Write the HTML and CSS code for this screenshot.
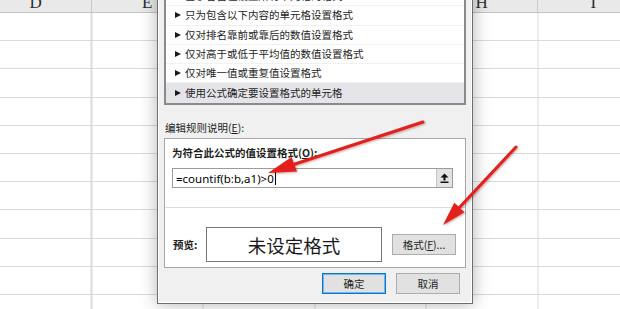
FILE: index.html
```html
<!DOCTYPE html>
<html lang="zh-CN">
<head>
  <meta charset="UTF-8" />
  <meta name="viewport" content="width=device-width, initial-scale=1.0"/>
  <title>新建格式规则</title>
  <link rel="stylesheet" href="styles.css">
</head>
<body>
  <div class="sheet">
    <div class="col-heads">
      <div class="col-head">D</div>
      <div class="col-head">E</div>
      <div class="col-head">F</div>
      <div class="col-head">G</div>
      <div class="col-head">H</div>
      <div class="col-head">I</div>
    </div>
    <div class="cells"></div>

    <div class="dialog">
      <ul class="rule-list">
        <li>基于各自值设置所有单元格的格式</li>
        <li>只为包含以下内容的单元格设置格式</li>
        <li>仅对排名靠前或靠后的数值设置格式</li>
        <li>仅对高于或低于平均值的数值设置格式</li>
        <li>仅对唯一值或重复值设置格式</li>
        <li class="selected">使用公式确定要设置格式的单元格</li>
      </ul>

      <div class="caption">编辑规则说明(<u>E</u>):</div>

      <div class="group">
        <div class="formula-part">
          <div class="label">为符合此公式的值设置格式(<u>O</u>):</div>
          <div class="formula">
            <span class="formula-text">=countif(b:b,a1)&gt;0</span><i class="caret"></i>
            <span class="collapse">
              <svg width="9" height="11" viewBox="0 0 9 11">
                <polygon points="4.5,0.5 0.5,4.5 8.5,4.5" fill="#111"/>
                <rect x="3.5" y="4" width="2" height="3.5" fill="#111"/>
                <rect x="0.5" y="8.5" width="8" height="1.5" fill="#111"/>
              </svg>
            </span>
          </div>
        </div>
        <div class="preview-part">
          <span class="label">预览:</span>
          <div class="preview">未设定格式</div>
          <button class="btn">格式(<u>F</u>)...</button>
        </div>
      </div>

      <div class="actions">
        <button class="btn default">确定</button>
        <button class="btn">取消</button>
      </div>
    </div>

    <!-- red annotation arrows -->
    <svg class="arrows" width="620" height="309" viewBox="0 0 620 309">
      <line x1="423" y1="122" x2="292" y2="165" stroke="#e3201b" stroke-width="3" stroke-linecap="round"/>
      <polygon points="268,173 297,171.5 291.5,157" fill="#e3201b"/>
      <line x1="516" y1="147" x2="458" y2="209" stroke="#e3201b" stroke-width="3" stroke-linecap="round"/>
      <polygon points="443,225 464.5,212.3 454.3,202.7" fill="#e3201b"/>
    </svg>
  </div>
</body>
</html>
```

FILE: styles.css
```css
body {
  margin: 0;
  background: #fff;
  font-family: "Noto Sans CJK SC", "Noto Sans", sans-serif;
  color: #1e1e1e;
}
.sheet {
  position: relative;
  width: 620px;
  height: 309px;
  overflow: hidden;
  background: #fff;
}

/* spreadsheet behind the dialog */
.col-heads {
  display: flex;
  margin-top: -6px;
  margin-left: -19.5px;
  height: 18px;
  border-bottom: 1px solid #c4c4c4;
  background: #e9e9e9;
}
.col-head {
  flex: 0 0 111.5px;
  box-sizing: border-box;
  border-right: 1px solid #c8c8c8;
  text-align: center;
  font-family: "Liberation Serif", serif;
  font-size: 17px;
  line-height: 18px;
  color: #2b2b2b;
}
.cells {
  height: 296px;
  background-image:
    repeating-linear-gradient(to bottom, transparent 0 27.2px, #dadada 27.2px 28.2px),
    repeating-linear-gradient(to right, transparent 0 110.5px, #dadada 110.5px 111.5px);
  background-position: 0 0, -19.5px 0;
}

/* dialog window */
.dialog {
  position: absolute;
  left: 157px;
  top: -22px;
  width: 316px;
  height: 326px;
  box-sizing: border-box;
  padding: 6px;
  background: #f0f0f0;
  border: 1px solid #6e6e6e;
  box-shadow: inset 0 0 0 1px #fff, 0 0 16px rgba(0, 0, 0, 0.3);
  font-size: 10.5px;
}
.rule-list {
  list-style: none;
  margin: 0;
  padding: 0;
  background: #fff;
  border: 2px solid #8a8a8a;
}
.rule-list li {
  height: 19.25px;
  box-sizing: border-box;
  border-bottom: 1px solid #f1f1f1;
  display: flex;
  align-items: center;
  padding-left: 9px;
  line-height: 14px;
}
.rule-list li::before {
  content: "";
  border-left: 6px solid #1a1a1a;
  border-top: 3.5px solid transparent;
  border-bottom: 3.5px solid transparent;
  margin-right: 4px;
}
.rule-list li.selected {
  background: #e4e4e9;
  border-bottom: 0;
}
.caption {
  margin-top: 16.5px;
  padding-left: 1px;
  line-height: 14px;
}
.group {
  margin-top: 3px;
  height: 130px;
  box-sizing: border-box;
  border: 1px solid #a8a8a8;
  background: #fff;
}
.label {
  font-weight: bold;
  line-height: 14px;
}
.formula-part {
  height: 69px;
  box-sizing: border-box;
  padding: 7px 0 0 7px;
  border-bottom: 1px solid #dcdcdc;
}
.formula {
  display: flex;
  align-items: center;
  margin-top: 8px;
  width: 281px;
  height: 20px;
  box-sizing: border-box;
  border: 1px solid #9c9c9c;
  padding-left: 3px;
}
.formula-text {
  font-family: "Noto Sans", sans-serif;
  font-size: 11.5px;
  color: #000;
}
.caret {
  width: 1px;
  height: 14px;
  background: #000;
  margin-left: 1px;
}
.collapse {
  margin-left: auto;
  width: 15px;
  height: 18px;
  display: flex;
  align-items: center;
  justify-content: center;
  background: #e3e3e3;
  border-left: 1px solid #c6c6c6;
}
.preview-part {
  display: flex;
  align-items: center;
  padding: 19px 0 0 8px;
}
.preview-part .label {
  width: 33px;
}
.preview {
  width: 176px;
  height: 35px;
  box-sizing: border-box;
  border: 1px solid #767676;
  display: flex;
  align-items: center;
  justify-content: center;
  font-size: 18.5px;
  color: #1a1a1a;
}
.btn {
  width: 64px;
  height: 21px;
  box-sizing: border-box;
  padding: 0;
  border: 1px solid #adadad;
  background: #e1e1e1;
  font-family: inherit;
  font-size: 10.5px;
  color: #1e1e1e;
}
.preview-part .btn {
  margin-left: 10px;
}
.btn.default {
  border-color: #0078d7;
  box-shadow: inset 0 0 0 1px rgba(0, 120, 215, 0.45);
}
.actions {
  display: flex;
  justify-content: flex-end;
  gap: 10px;
  margin-top: 5px;
  padding-right: 6px;
}

/* annotation overlay */
.arrows {
  position: absolute;
  left: 0;
  top: 0;
  pointer-events: none;
  filter: drop-shadow(1px 1px 1px rgba(110, 0, 0, 0.35));
}
```
